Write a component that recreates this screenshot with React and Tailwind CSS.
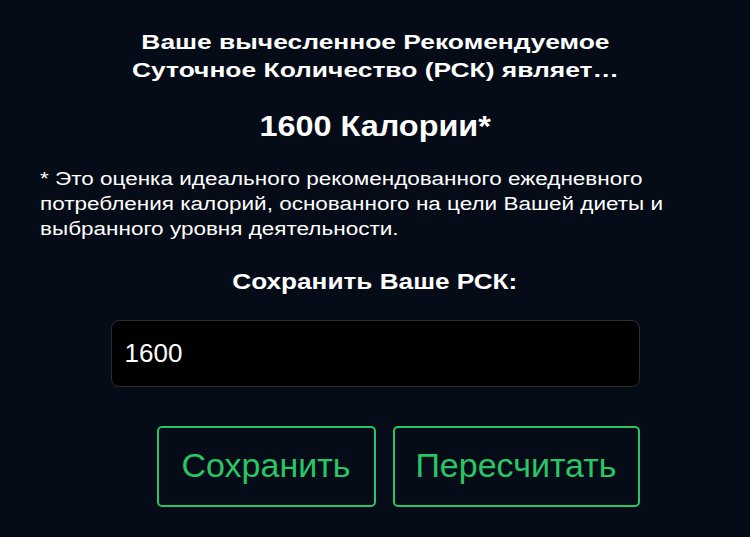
import React, { useState } from 'react';

const App = () => {
  const [rsk, setRsk] = useState('1600');

  return (
    <div
      className="min-h-[537px] w-full bg-[#050b17] text-white"
      style={{ fontFamily: '"Liberation Sans", Arial, sans-serif' }}
    >
      <div className="mx-auto flex w-[750px] flex-col items-center pt-[28px]">
        {/* Heading */}
        <h1 className="text-center text-[20px] font-bold leading-[28px] whitespace-nowrap">
          <span className="inline-block scale-x-[1.32]">
            Ваше вычесленное Рекомендуемое
            <br />
            Суточное Количество (РСК) являет…
          </span>
        </h1>

        <h2 className="mt-[24px] text-center text-[30px] font-bold leading-[36px] whitespace-nowrap">
          <span className="inline-block scale-x-[1.08]">1600 Калории*</span>
        </h2>

        <p className="mt-[23px] w-full pl-[40px] text-left text-[18px] leading-[25px] whitespace-nowrap">
          <span className="inline-block origin-left scale-x-[1.25]">
            * Это оценка идеального рекомендованного ежедневного
            <br />
            потребления калорий, основанного на цели Вашей диеты и
            <br />
            выбранного уровня деятельности.
          </span>
        </p>

        <h3 className="mt-[25px] text-center text-[22px] font-bold leading-[30px] whitespace-nowrap">
          <span className="inline-block scale-x-[1.19]">Сохранить Ваше РСК:</span>
        </h3>

        <input
          value={rsk}
          onChange={(e) => setRsk(e.target.value)}
          className="mt-[23px] h-[67px] w-[529px] rounded-[8px] border border-[#2b2e33] bg-black px-[13px] text-[26px] text-white focus:outline-none"
        />

        {/* Actions */}
        <div className="mt-[39px] flex w-[529px] justify-end gap-[17px]">
          <button className="h-[81px] w-[219px] rounded-[5px] border-2 border-[#27c666] pb-[2px] text-[34px] text-[#27c666]">
            Сохранить
          </button>
          <button className="h-[81px] w-[247px] rounded-[5px] border-2 border-[#27c666] pb-[2px] text-[34px] text-[#27c666]">
            Пересчитать
          </button>
        </div>
      </div>
    </div>
  );
};

export default App;
